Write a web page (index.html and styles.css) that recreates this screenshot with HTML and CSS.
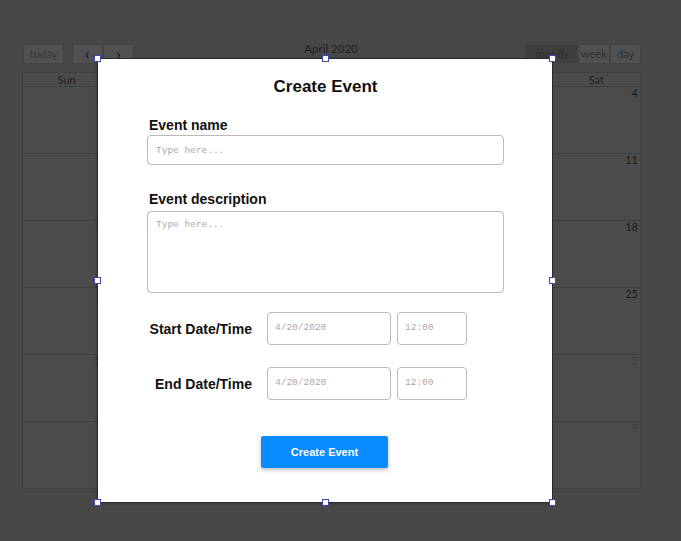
FILE: index.html
```html
<!DOCTYPE html>
<html>
<head>
<meta charset="utf-8">
<link rel="stylesheet" href="styles.css">
</head>
<body>
<div class="calendar">
  <div class="toolbar">
    <div class="tb-left">
      <button class="cbtn today">today</button>
      <div class="group">
        <button class="cbtn arrow">&#8249;</button>
        <button class="cbtn arrow">&#8250;</button>
      </div>
    </div>
    <div class="tb-title">April 2020</div>
    <div class="group">
      <button class="cbtn active">month</button>
      <button class="cbtn week">week</button>
      <button class="cbtn day">day</button>
    </div>
  </div>
  <div class="grid">
    <div class="head">Sun</div><div class="head">Mon</div><div class="head">Tue</div><div class="head">Wed</div><div class="head">Thu</div><div class="head">Fri</div><div class="head">Sat</div>
    <div class="cell other">29</div><div class="cell other">30</div><div class="cell other">31</div><div class="cell">1</div><div class="cell">2</div><div class="cell">3</div><div class="cell">4</div>
    <div class="cell">5</div><div class="cell">6</div><div class="cell">7</div><div class="cell">8</div><div class="cell">9</div><div class="cell">10</div><div class="cell">11</div>
    <div class="cell">12</div><div class="cell">13</div><div class="cell">14</div><div class="cell">15</div><div class="cell">16</div><div class="cell">17</div><div class="cell">18</div>
    <div class="cell">19</div><div class="cell">20</div><div class="cell">21</div><div class="cell">22</div><div class="cell">23</div><div class="cell">24</div><div class="cell">25</div>
    <div class="cell">26</div><div class="cell">27</div><div class="cell">28</div><div class="cell">29</div><div class="cell">30</div><div class="cell other">1</div><div class="cell other">2</div>
    <div class="cell other">3</div><div class="cell other">4</div><div class="cell other">5</div><div class="cell other">6</div><div class="cell other">7</div><div class="cell other">8</div><div class="cell other">9</div>
  </div>
</div>

<div class="modal">
  <h1 class="m-title">Create Event</h1>
  <label class="m-label">Event name</label>
  <input class="m-input" type="text" placeholder="Type here...">
  <label class="m-label desc">Event description</label>
  <textarea class="m-area" placeholder="Type here..."></textarea>
  <div class="dt-row first">
    <span class="dt-label">Start Date/Time</span>
    <input class="dt-date" type="text" placeholder="4/20/2020">
    <input class="dt-time" type="text" placeholder="12:00">
  </div>
  <div class="dt-row">
    <span class="dt-label">End Date/Time</span>
    <input class="dt-date" type="text" placeholder="4/20/2020">
    <input class="dt-time" type="text" placeholder="12:00">
  </div>
  <button class="submit">Create Event</button>

  <span class="handle h-tl"></span>
  <span class="handle h-tc"></span>
  <span class="handle h-tr"></span>
  <span class="handle h-ml"></span>
  <span class="handle h-mr"></span>
  <span class="handle h-bl"></span>
  <span class="handle h-bc"></span>
  <span class="handle h-br"></span>
</div>
</body>
</html>
```
FILE: styles.css
```css
* { box-sizing: border-box; }
html, body { margin: 0; padding: 0; }
body {
  background: #474747;
  width: 681px;
  height: 541px;
  overflow: hidden;
  position: relative;
  font-family: Lato, "Liberation Sans", sans-serif;
}
.calendar {
  padding: 44px 40px 0 22px;
}
.toolbar {
  display: flex;
  justify-content: space-between;
  align-items: flex-start;
  height: 20px;
  width: 619px;
}
.tb-left { display: flex; gap: 8px; padding-left: 1px; }
.group { display: flex; }
.cbtn {
  font-family: Lato, sans-serif;
  font-size: 11px;
  color: #2f2f2f;
  background: #515151;
  border: 1px solid #444;
  height: 20px;
  padding: 0;
  margin: 0;
  border-radius: 2px;
  line-height: 18px;
  text-align: center;
}
.group .cbtn { border-radius: 0; }
.group .cbtn:first-child { border-radius: 2px 0 0 2px; }
.group .cbtn:last-child { border-radius: 0 2px 2px 0; }
.cbtn.today { width: 41px; color: #383838; }
.cbtn.arrow { width: 31px; font-size: 17px; color: #151515; line-height: 16px; }
.cbtn.active { background: #3e3e3e; width: 53px; }
.cbtn.week { width: 32px; }
.cbtn.day { width: 31px; }
.tb-title {
  font-size: 11.5px;
  line-height: 12px;
  color: #202020;
  margin-top: -1px;
  padding-left: 3px;
}
.grid {
  margin-top: 8px;
  width: 619px;
  display: grid;
  grid-template-columns: repeat(7, 1fr);
  grid-template-rows: 14px repeat(6, 67px);
  border-left: 1px solid #3f3f3f;
  border-top: 1px solid #3f3f3f;
  background: #4b4b4b;
}
.head, .cell {
  border-right: 1px solid #3f3f3f;
  border-bottom: 1px solid #3f3f3f;
  font-size: 11px;
}
.head { text-align: center; color: #202020; line-height: 13px; }
.cell { text-align: right; padding: 0 2px 0 0; line-height: 12px; color: #1c1c1c; }
.cell.other { color: #3e3e3e; }

.modal {
  position: absolute;
  left: 98px;
  top: 59px;
  width: 454px;
  height: 443px;
  background: #fff;
  box-shadow: 0 0 0 1px #2c2c2c, -1px 1px 3px rgba(0,0,0,0.4);
  display: flex;
  flex-direction: column;
  padding: 18px 48px 0 49px;
  font-family: "Liberation Sans", Arial, sans-serif;
}
.m-title {
  margin: 0;
  text-align: center;
  font-size: 17px;
  line-height: 20px;
  font-weight: bold;
  color: #111;
}
.m-label {
  margin: 20px 0 0 2px;
  font-size: 14px;
  line-height: 16px;
  font-weight: bold;
  color: #111;
}
.m-label.desc { margin-top: 26px; }
.m-input, .m-area, .dt-date, .dt-time {
  border: 1px solid #b9b9b9;
  border-radius: 4px;
  font-family: "Liberation Mono", monospace;
  font-size: 9.5px;
  color: #333;
  outline: none;
  background: #fff;
  margin: 0;
}
.m-input::placeholder, .m-area::placeholder, .dt-date::placeholder, .dt-time::placeholder {
  color: #a9a9a9;
}
.m-input {
  margin-top: 2px;
  width: 357px;
  height: 30px;
  padding: 0 8px;
}
.m-area {
  margin-top: 4px;
  width: 357px;
  height: 82px;
  padding: 7px 8px;
  resize: none;
}
.dt-row {
  display: flex;
  align-items: center;
  margin-top: 22px;
  height: 33px;
}
.dt-row.first { margin-top: 19px; }
.dt-label {
  width: 105px;
  text-align: right;
  font-size: 14px;
  font-weight: bold;
  color: #111;
  margin-right: 15px;
}
.dt-date, .dt-time {
  height: 33px;
  padding: 0 7px 2px;
}
.dt-date { width: 124px; margin-right: 6px; }
.dt-time { width: 70px; }
.submit {
  align-self: center;
  margin: 36px 0 0 -2px;
  width: 127px;
  height: 32px;
  background: #0a8bff;
  border: none;
  border-radius: 2px;
  color: #fff;
  font-family: "Liberation Sans", Arial, sans-serif;
  font-weight: bold;
  font-size: 11px;
  box-shadow: 0 2px 4px rgba(0,0,0,0.25);
}
.handle {
  position: absolute;
  width: 7px;
  height: 7px;
  background: #fff;
  border: 1.5px solid #3a48b0;
}
.h-tl { left: -4px; top: -4px; }
.h-tc { left: 224px; top: -4px; }
.h-tr { right: -4px; top: -4px; }
.h-ml { left: -4px; top: 218px; }
.h-mr { right: -4px; top: 218px; }
.h-bl { left: -4px; bottom: -4px; }
.h-bc { left: 224px; bottom: -4px; }
.h-br { right: -4px; bottom: -4px; }
```
